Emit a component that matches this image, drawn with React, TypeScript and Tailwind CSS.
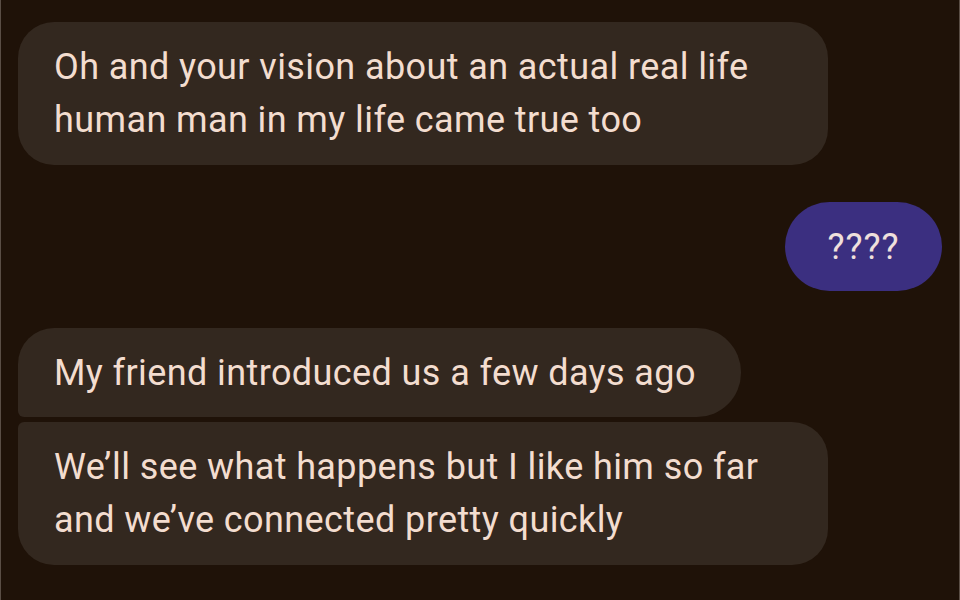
export default function App() {
  const font = { fontFamily: "Roboto, 'Open Sans', sans-serif" };
  return (
    <div
      className="w-[960px] h-[600px] bg-[#1f1208] border-l border-r border-[#5a4e45] flex flex-col px-[17px] pt-[22px] overflow-hidden"
      style={font}
    >
      {/* incoming */}
      <div className="w-[810px] bg-[#33281f] rounded-[36px] px-9 pt-[19px] pb-[18px] text-[36px] tracking-[0.4px] leading-[53px] text-[#f3ddcf]">
        Oh and your vision about an actual real life
        <br />
        human man in my life came true too
      </div>

      {/* outgoing */}
      <div className="mt-[37px] self-end flex items-center justify-center w-[157px] h-[89px] rounded-full bg-[#3b2f80] text-[36px] tracking-[1px] text-[#efe0dc]">
        ????
      </div>

      {/* incoming group */}
      <div className="mt-[37px] self-start bg-[#33281f] rounded-tl-[36px] rounded-bl-[6px] rounded-r-[44px] pl-9 pr-[45px] pt-[19px] pb-[17px] text-[36px] tracking-[0.4px] leading-[53px] text-[#f3ddcf]">
        My friend introduced us a few days ago
      </div>
      <div className="mt-[5px] w-[810px] bg-[#33281f] rounded-tl-[6px] rounded-bl-[36px] rounded-r-[36px] px-9 pt-[19px] pb-[18px] text-[36px] tracking-[0.4px] leading-[53px] text-[#f3ddcf]">
        We’ll see what happens but I like him so far
        <br />
        and we’ve connected pretty quickly
      </div>
    </div>
  );
}
